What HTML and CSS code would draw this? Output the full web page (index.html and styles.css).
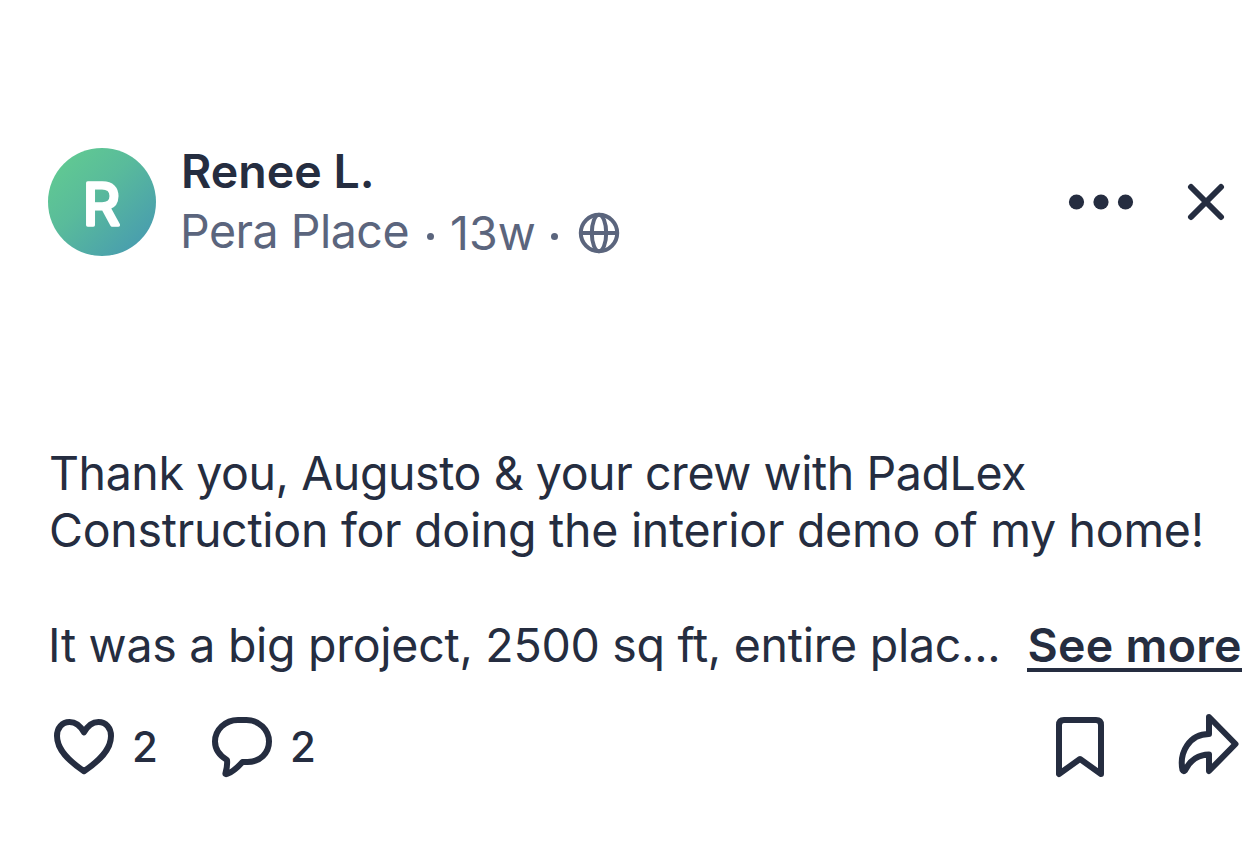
FILE: index.html
```html
<!DOCTYPE html>
<html lang="en">

<head>
    <meta charset="utf-8">
    <title>Post</title>
    <link rel="stylesheet" href="styles.css">
</head>

<body>
    <div class="post">
        <div class="post_header">
            <svg class="avatar" viewBox="0 0 108 108">
                <defs>
                    <linearGradient id="avatar_bg" x1="0.15" y1="0.12" x2="0.88" y2="0.86">
                        <stop offset="0" stop-color="#60c893" />
                        <stop offset="0.4" stop-color="#59bb9b" />
                        <stop offset="1" stop-color="#499eae" />
                    </linearGradient>
                </defs>
                <circle cx="54" cy="54" r="54" fill="url(#avatar_bg)" />
                <text class="avatar_letter" x="53.500" y="76.500" text-anchor="middle">R</text>
            </svg>
            <div class="author">
                <div class="name">Renee L.</div>
                <div class="meta">
                    <span class="place">Pera Place</span>
                    <span class="dot"></span>
                    <span class="time">13w</span>
                    <span class="dot dot2"></span>
                    <svg class="globe" viewBox="0 0 42 42">
                        <circle cx="21" cy="21" r="18.2" />
                        <ellipse cx="21" cy="21" rx="7.2" ry="18.2" />
                        <path d="M3 21h36" />
                    </svg>
                </div>
            </div>
            <svg class="more_icon" viewBox="0 0 66 16">
                <circle cx="8.5" cy="8" r="7.6" />
                <circle cx="33" cy="8" r="7.6" />
                <circle cx="57.5" cy="8" r="7.6" />
            </svg>
            <svg class="close_icon" viewBox="0 0 38 38">
                <path d="M4 4l30 30M34 4L4 34" />
            </svg>
        </div>

        <div class="post_text">
            <div class="line line1">Thank you, Augusto &amp; your crew with PadLex</div>
            <div class="line line2">Construction for doing the interior demo of my home!</div>
            <div class="line blank"></div>
            <div class="line last">
                <span class="line3">It was a big project, 2500 sq ft, entire plac...</span>
                <a class="see_more">See more</a>
            </div>
        </div>

        <div class="actions">
            <svg class="icon heart" viewBox="0 3 66 66">
                <path d="M34 23.4C30 16 25 13 19.5 13C12 13 7 19 7 27C7 41 19 52 34 62.2C49 52 61 41 61 27C61 19 56 13 48.5 13C43 13 38 16 34 23.4Z" />
            </svg>
            <span class="count">2</span>
            <svg class="icon comment" viewBox="0 2 66 66">
                <path d="M28 10H36.500C49 10 59 20 59 31.500C59 43 50 52 37.500 52H32.500C28 57 23 62 17 64C15.500 64.500 15.200 64 15.500 63C17 58 17.500 54.500 17 50C9.500 45.500 5 39 5 31.500C5 20 15 10 28 10Z" />
            </svg>
            <span class="count">2</span>
            <svg class="icon bookmark" viewBox="0 2 66 66">
                <path d="M12 64V15Q12 10 17 10H49Q54 10 54 15V64L33 49Z" />
            </svg>
            <svg class="icon share" viewBox="0 2 66 66">
                <path d="M36 7L62.500 34L36 61V44.500C26 44.500 17 50 12 60.500Q10.500 62 9.500 60C6 43 16 24 36 24Z" />
            </svg>
        </div>
    </div>
</body>

</html>
```

FILE: styles.css
```css
body {
    margin: 0;
    background-color: #ffffff;
    color: #252d40;
    font-family: Inter, "Liberation Sans", sans-serif;
    font-size: 46.5px;
    overflow: hidden;
}

.post {
    padding: 141px 0 0 48px;
}

.post_header {
    display: flex;
    align-items: center;
    height: 122px;
}

.avatar {
    width: 108px;
    height: 108px;
}

.avatar_letter {
    font-size: 58px;
    font-weight: 400;
    fill: #ffffff;
    stroke: #ffffff;
    stroke-width: 3.6px;
    stroke-linejoin: round;
}

.author {
    margin: -2px 0 0 25px;
    flex: 1;
    line-height: 60px;
    white-space: nowrap;
}

.name {
    font-weight: 600;
}

.meta {
    display: flex;
    align-items: center;
    color: #5b657d;
}

.place {
    margin-left: -1px;
    letter-spacing: -0.5px;
}

.time {
    position: relative;
    top: 2px;
}

.dot {
    width: 7px;
    height: 7px;
    margin: 10px 16px 0 18px;
    border-radius: 50%;
    background-color: #5b657d;
}

.dot2 {
    margin: 10px 20px 0 15px;
}

.globe {
    width: 42px;
    height: 42px;
    margin-top: 4px;
    fill: none;
    stroke: #5b657d;
    stroke-width: 4;
}

.more_icon {
    width: 66px;
    height: 16px;
    fill: #252d40;
}

.close_icon {
    width: 38px;
    height: 38px;
    margin: 0 18px 0 53px;
    fill: none;
    stroke: #252d40;
    stroke-width: 6;
    stroke-linecap: round;
}

.post_text {
    margin-top: 182px;
    line-height: 57.25px;
    white-space: nowrap;
}

.line {
    height: 57.25px;
}

.line1 {
    padding-left: 1px;
    letter-spacing: -0.42px;
}

.line2 {
    padding-left: 1px;
    letter-spacing: -0.28px;
}

.line3 {
    letter-spacing: -0.28px;
}

.last {
    display: flex;
}

.see_more {
    height: 51px;
    margin-left: 27px;
    padding-top: 1px;
    margin-top: -1px;
    border-bottom: 4px solid #252d40;
    font-weight: 600;
    letter-spacing: 0.3px;
}

.actions {
    display: flex;
    align-items: center;
    height: 66px;
    margin-top: 38px;
}

.icon {
    width: 66px;
    height: 66px;
    fill: none;
    stroke: #252d40;
    stroke-width: 6;
    stroke-linejoin: round;
    stroke-linecap: round;
}

.count {
    width: 25px;
    padding-top: 2px;
    font-size: 42px;
    font-weight: 500;
}

.heart {
    margin: 0 16px 0 2px;
}

.comment {
    margin: 0 14px 0 53px;
}

.bookmark {
    margin: 0 60px 0 auto;
}

.share {
    margin-right: 4px;
}
```
